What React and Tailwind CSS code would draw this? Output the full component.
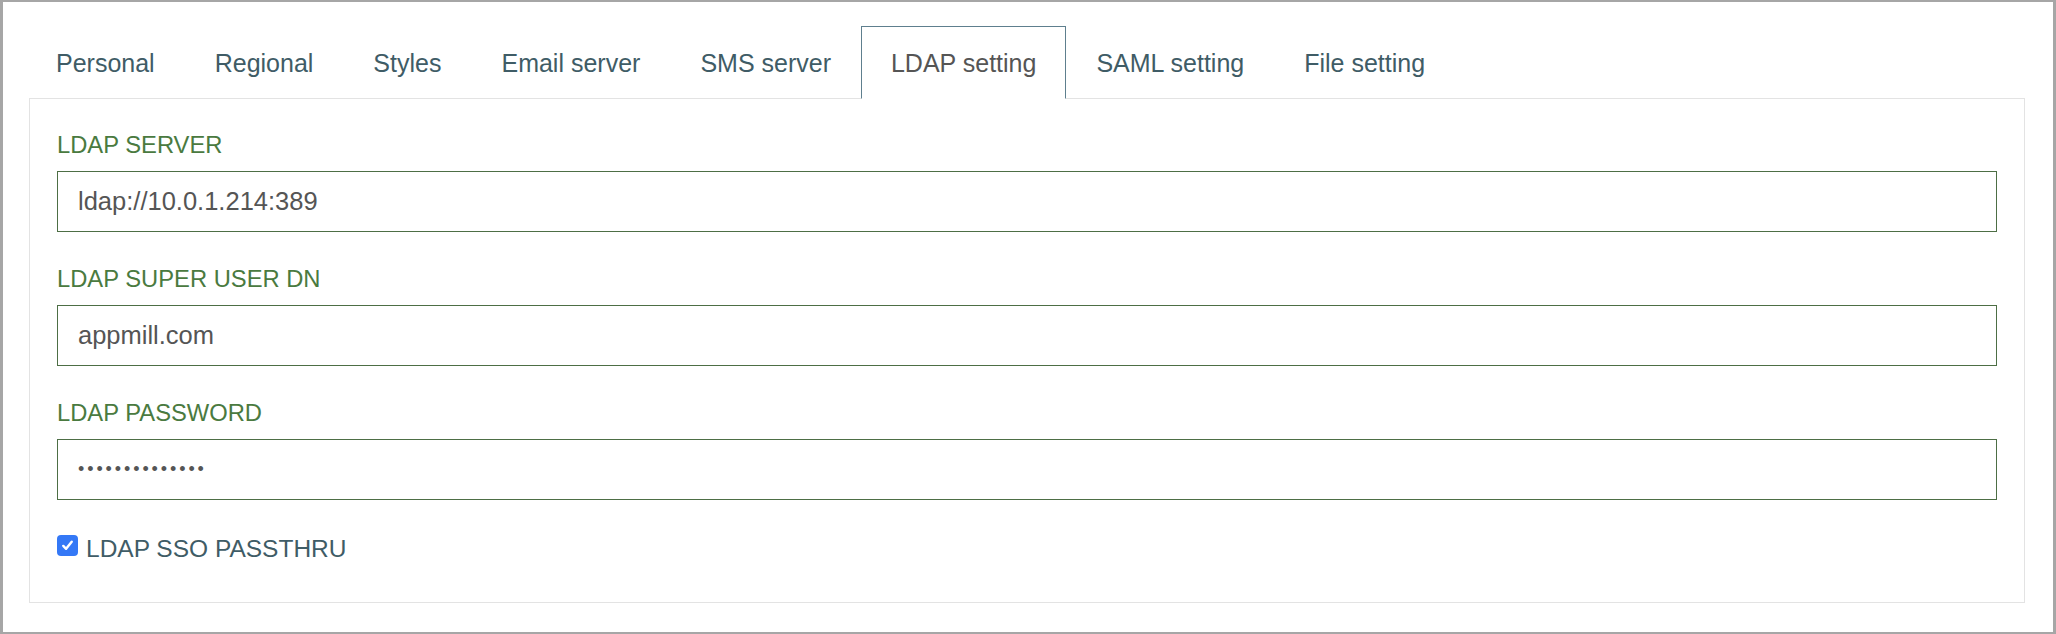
import { useState } from 'react';

const TABS = [
  'Personal',
  'Regional',
  'Styles',
  'Email server',
  'SMS server',
  'LDAP setting',
  'SAML setting',
  'File setting'
];

function Field({ label, first, children }) {
  return (
    <div className={first ? '' : 'mt-[29px]'}>
      <div className="h-[36px] text-[23.75px] leading-[36px] text-[#4a7a40]">{label}</div>
      <div className="mt-[8px]">{children}</div>
    </div>
  );
}

export default function App() {
  const [active, setActive] = useState('LDAP setting');
  const [server, setServer] = useState('ldap://10.0.1.214:389');
  const [dn, setDn] = useState('appmill.com');
  const [password, setPassword] = useState('aaaaaaaaaaaaaa');
  const [passthru, setPassthru] = useState(true);

  const inputClass =
    'block h-[61px] w-full border border-[#4d6e45] bg-white pl-[20px] text-[25.5px] text-[#555] outline-none';

  return (
    <div className="box-border flex h-[634px] w-[2056px] flex-col border-y-2 border-l-[3px] border-r-[3px] border-[#a6a6a6] bg-white pt-[24px] pr-[28px] pb-[29px] pl-[23px] font-['Liberation_Sans',Arial,sans-serif]">
      <div className="relative z-10 flex h-[73px]">
        {TABS.map((tab) => {
          const isActive = tab === active;
          return (
            <button
              key={tab}
              onClick={() => setActive(tab)}
              className={
                isActive
                  ? 'flex h-[73px] items-center whitespace-nowrap border border-[#5e7f8e] border-b-white bg-white px-[29px] pt-[2px] text-[25px] text-[#555]'
                  : 'flex h-[73px] items-center whitespace-nowrap border border-transparent px-[29px] pt-[2px] text-[25px] text-[#3f5c66]'
              }
            >
              {tab}
            </button>
          );
        })}
      </div>

      <div className="-mt-px ml-[3px] flex-1 border border-[#e3e3e3] px-[27px] pt-[28px]">
        <Field label="LDAP SERVER" first>
          <input className={inputClass} value={server} onChange={(e) => setServer(e.target.value)} />
        </Field>
        <Field label="LDAP SUPER USER DN">
          <input className={inputClass} value={dn} onChange={(e) => setDn(e.target.value)} />
        </Field>
        <Field label="LDAP PASSWORD">
          <input
            type="password"
            className="block h-[61px] w-full border border-[#4d6e45] bg-white pl-[20px] text-[18px] tracking-[2.9px] text-[#555] outline-none"
            value={password}
            onChange={(e) => setPassword(e.target.value)}
          />
        </Field>

        <label className="mt-[31px] flex h-[36px] cursor-pointer items-start">
          <span
            onClick={() => setPassthru(!passthru)}
            className={
              passthru
                ? 'mt-[4px] flex h-[21px] w-[21px] items-center justify-center rounded-[4px] bg-[#3478f6]'
                : 'mt-[4px] flex h-[21px] w-[21px] items-center justify-center rounded-[4px] border border-[#999] bg-white'
            }
          >
            {passthru && (
              <svg viewBox="0 0 16 16" className="h-[15px] w-[15px]">
                <path d="M3.5 8.5 L6.5 11.5 L12.5 4" fill="none" stroke="white" strokeWidth="2.6" strokeLinecap="round" strokeLinejoin="round" />
              </svg>
            )}
          </span>
          <span className="ml-[8px] text-[24.5px] leading-[36px] text-[#3f5c66]">LDAP SSO PASSTHRU</span>
        </label>
      </div>
    </div>
  );
}
